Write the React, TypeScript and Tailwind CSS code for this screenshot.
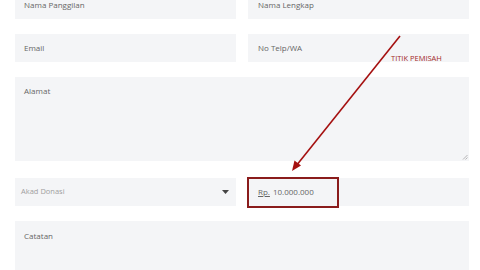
import React from "react";

const Field = ({ label, className = "" }: { label: string; className?: string }) => (
  <div className={`h-[28px] bg-[#f4f5f7] flex items-center pl-[9px] text-[8px] text-[#666] ${className}`}>{label}</div>
);

export default function App() {
  return (
    <div className="relative w-[480px] h-[270px] overflow-hidden bg-white" style={{ fontFamily: '"Open Sans", sans-serif' }}>
      <div className="pl-[15px] pr-[11px] -mt-[9px] flex flex-col">
        <div className="grid grid-cols-2 gap-x-[12px]">
          <Field label="Nama Panggilan" />
          <Field label="Nama Lengkap" className="pl-[10px]" />
        </div>
        <div className="grid grid-cols-2 gap-x-[12px] mt-[15px]">
          <Field label="Email" />
          <Field label="No Telp/WA" className="pl-[10px]" />
        </div>
        <div className="relative mt-[15px] h-[84px] bg-[#f4f5f7] pl-[9px] pt-[8px] text-[8px] text-[#666]">
          Alamat
          <svg className="absolute right-[1px] bottom-[1px]" width="6" height="6" viewBox="0 0 6 6">
            <path d="M1 5.5L5.5 1M3.5 5.5L5.5 3.5" stroke="#999" strokeWidth="0.7" />
          </svg>
        </div>
        <div className="grid grid-cols-2 gap-x-[12px] mt-[17px]">
          <div className="h-[28px] bg-[#f4f5f7] flex items-center justify-between pl-[6px] pr-[7px] text-[7.5px] text-[#a0a0a0]">
            <span>Akad Donasi</span>
            <svg width="7" height="4" viewBox="0 0 7 4">
              <path d="M0 0H7L3.5 4Z" fill="#444" />
            </svg>
          </div>
          <div className="h-[28px] bg-[#f4f5f7] flex items-center pl-[10px] text-[8px] text-[#666]">
            <span className="underline underline-offset-1">Rp.</span>
            <span className="ml-[3px]">10.000.000</span>
          </div>
        </div>
        <div className="mt-[15px] h-[80px] bg-[#f4f5f7] pl-[9px] pt-[9px] text-[8px] text-[#666]">Catatan</div>
      </div>

      <div className="absolute left-[247px] top-[177px] w-[92px] h-[31px] border-2 border-[#8a1c1c]" />
      <span className="absolute left-[391px] top-[53px] text-[7.5px] text-[#a32a2a]">TITIK PEMISAH</span>
      <svg className="absolute left-0 top-0" width="480" height="270">
        <line x1="400" y1="36" x2="296" y2="166" stroke="#a51010" strokeWidth="1.6" />
        <path d="M292 171L294.5 160.5L301 165.5Z" fill="#a51010" />
      </svg>
    </div>
  );
}
